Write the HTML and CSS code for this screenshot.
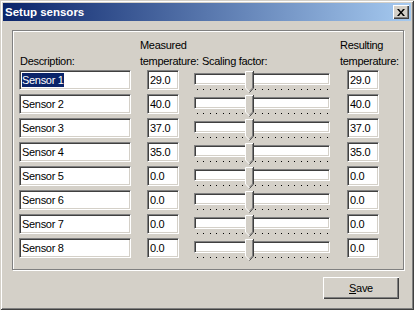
FILE: index.html
```html
<!DOCTYPE html>
<html lang="en">
<head>
    <meta charset="UTF-8">
    <title>Setup sensors</title>
    <link rel="stylesheet" href="styles.css">
</head>
<body>

    <!-- thumb shape for the trackbars -->
    <svg width="0" height="0" class="defs">
        <symbol id="thumb" viewBox="0 0 9 22">
            <polygon points="0,0 9,0 9,17 4.5,21.5 0,17" fill="#d4d0c8"/>
            <polyline points="0.5,17 0.5,0.5 8,0.5" fill="none" stroke="#fff"/>
            <line x1="0.5" y1="17" x2="4.5" y2="21" stroke="#fff"/>
            <polyline points="8.5,0 8.5,17 4.5,21.5" fill="none" stroke="#404040"/>
            <polyline points="7.5,1 7.5,17 4.5,20" fill="none" stroke="#808080"/>
        </symbol>
    </svg>

    <div class="window">
        <div class="titlebar">
            <span class="title">Setup sensors</span>
            <div class="close-btn">
                <svg width="8" height="7" viewBox="0 0 8 7">
                    <path d="M0 0h2l2 2.5L6 0h2L5 3.5 8 7H6L4 4.5 2 7H0l3-3.5z" fill="#000"/>
                </svg>
            </div>
        </div>

        <div class="groupbox">
            <div class="sensor-grid">
                <div class="label single first">Description:</div>
                <div class="label shifted">Measured<br>temperature:</div>
                <div class="label single scaling">Scaling factor:</div>
                <div class="label shifted">Resulting<br>temperature:</div>

                <div class="field"><span class="selected">Sensor 1</span></div>
                <div class="field num">29.0</div>
                <div class="slider"><div class="track"><svg class="thumb"><use href="#thumb"/></svg></div><div class="ticks"></div></div>
                <div class="field num">29.0</div>

                <div class="field">Sensor 2</div>
                <div class="field num">40.0</div>
                <div class="slider"><div class="track"><svg class="thumb"><use href="#thumb"/></svg></div><div class="ticks"></div></div>
                <div class="field num">40.0</div>

                <div class="field">Sensor 3</div>
                <div class="field num">37.0</div>
                <div class="slider"><div class="track"><svg class="thumb"><use href="#thumb"/></svg></div><div class="ticks"></div></div>
                <div class="field num">37.0</div>

                <div class="field">Sensor 4</div>
                <div class="field num">35.0</div>
                <div class="slider"><div class="track"><svg class="thumb"><use href="#thumb"/></svg></div><div class="ticks"></div></div>
                <div class="field num">35.0</div>

                <div class="field">Sensor 5</div>
                <div class="field num">0.0</div>
                <div class="slider"><div class="track"><svg class="thumb"><use href="#thumb"/></svg></div><div class="ticks"></div></div>
                <div class="field num">0.0</div>

                <div class="field">Sensor 6</div>
                <div class="field num">0.0</div>
                <div class="slider"><div class="track"><svg class="thumb"><use href="#thumb"/></svg></div><div class="ticks"></div></div>
                <div class="field num">0.0</div>

                <div class="field">Sensor 7</div>
                <div class="field num">0.0</div>
                <div class="slider"><div class="track"><svg class="thumb"><use href="#thumb"/></svg></div><div class="ticks"></div></div>
                <div class="field num">0.0</div>

                <div class="field">Sensor 8</div>
                <div class="field num">0.0</div>
                <div class="slider"><div class="track"><svg class="thumb"><use href="#thumb"/></svg></div><div class="ticks"></div></div>
                <div class="field num">0.0</div>
            </div>
        </div>

        <div class="footer">
            <div class="btn"><u>S</u>ave</div>
        </div>
    </div>

</body>
</html>
```

FILE: styles.css
```css
* {
    margin: 0;
    padding: 0;
    box-sizing: border-box;
}

body {
    background-color: #d4d0c8;
    font-family: "Liberation Sans", Arial, sans-serif;
    font-size: 11px;
    letter-spacing: -0.3px;
    color: #000;
}

.defs {
    position: absolute;
}

/* 窗口外框 */
.window {
    width: 414px;
    height: 310px;
    padding: 3px;
    background-color: #d4d0c8;
    box-shadow: inset 1px 1px #d4d0c8, inset -1px -1px #404040,
                inset 2px 2px #fff, inset -2px -2px #808080;
}

.titlebar {
    height: 18px;
    display: flex;
    align-items: center;
    justify-content: space-between;
    padding: 0 2px;
    background: linear-gradient(to right, #0a246a, #a6caf0);
}

.title {
    color: #fff;
    font-weight: bold;
    font-size: 11.5px;
    letter-spacing: 0;
}

.close-btn {
    width: 16px;
    height: 14px;
    display: flex;
    align-items: center;
    justify-content: center;
    background-color: #d4d0c8;
    box-shadow: inset 1px 1px #fff, inset -1px -1px #404040, inset -2px -2px #808080;
}

/* 分组框 */
.groupbox {
    width: 392px;
    height: 240px;
    margin: 9px 0 0 9px;
    border: 1px solid #808080;
    box-shadow: inset 1px 1px #fff, 1px 1px #fff;
    padding: 6px 0 0 6px;
}

.sensor-grid {
    display: grid;
    grid-template-columns: 128px 47px 153px 32px;
    grid-template-rows: 29px repeat(8, 20px);
    row-gap: 4px;
}

.label {
    line-height: 16px;
    white-space: nowrap;
}

.label.single {
    padding-top: 16px;
}

.label.first {
    margin-left: 1px;
}

.label.scaling {
    margin-left: 8px;
}

.label.shifted {
    margin-left: -7px;
}

/* 输入框 */
.field {
    width: 112px;
    height: 20px;
    padding: 2px;
    line-height: 14px;
    background-color: #fff;
    border: 1px solid;
    border-color: #808080 #fff #fff #808080;
    box-shadow: inset 1px 1px #404040, inset -1px -1px #d4d0c8;
    white-space: nowrap;
}

.field.num {
    width: 32px;
}

.selected {
    display: inline-block;
    background-color: #0a246a;
    color: #fff;
}

/* 滑块 */
.slider {
    display: flex;
    flex-direction: column;
}

.track {
    position: relative;
    width: 136px;
    height: 15px;
    margin-top: 3px;
    background-color: #fff;
    border: 1px solid;
    border-color: #808080 #fff #fff #808080;
    box-shadow: inset 1px 1px #404040, inset -1px -1px #d4d0c8;
}

.thumb {
    position: absolute;
    left: 50px;
    top: -3px;
    width: 9px;
    height: 22px;
}

.ticks {
    width: 131px;
    height: 1px;
    margin: 4px 0 0 3px;
    background: repeating-linear-gradient(to right, #000 0 1px, transparent 1px 6.5px);
}

/* 底部按钮 */
.footer {
    display: flex;
    justify-content: flex-end;
    padding: 7px 12px 0 0;
}

.btn {
    width: 76px;
    height: 22px;
    line-height: 22px;
    text-align: center;
    background-color: #d4d0c8;
    box-shadow: inset 1px 1px #fff, inset -1px -1px #404040, inset -2px -2px #808080;
}
```
